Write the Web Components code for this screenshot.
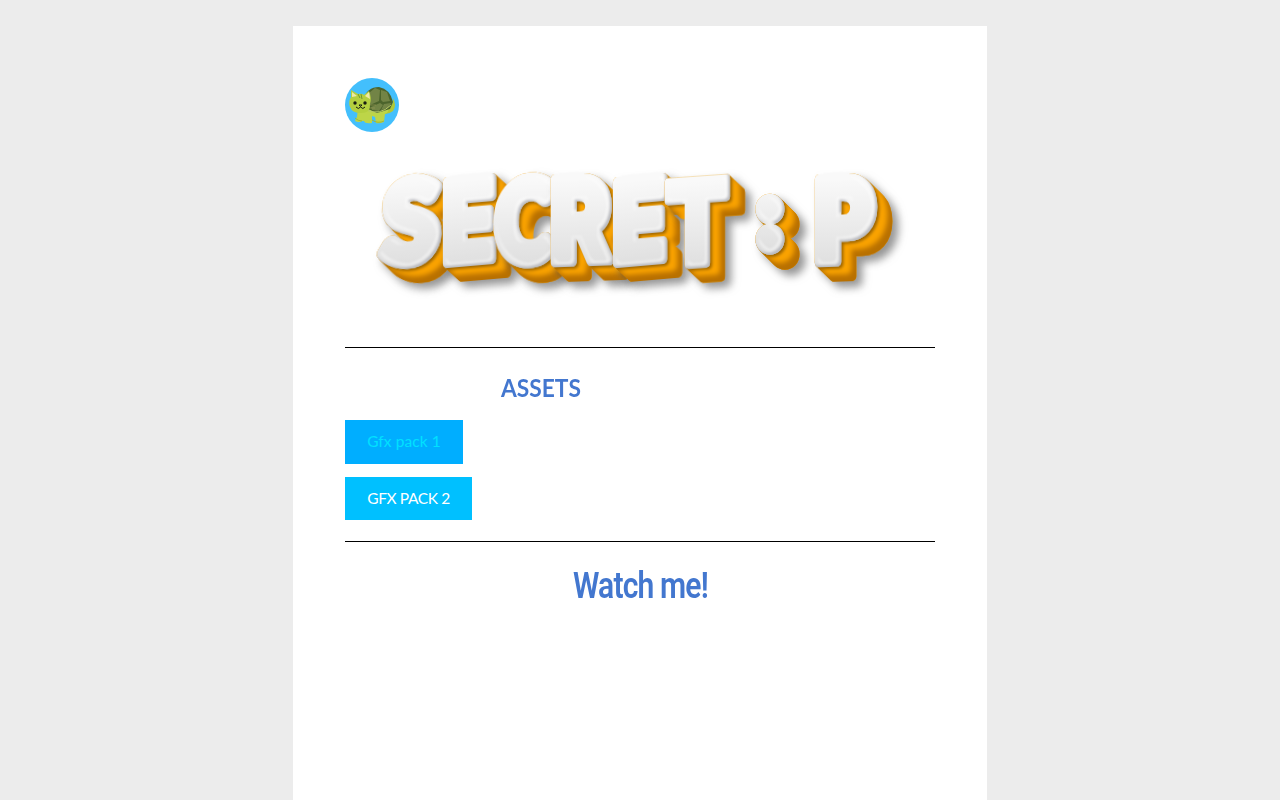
<!DOCTYPE html>
<html lang="en"><head><meta charset="utf-8"><title>Secret :P</title>
<style>html,body{margin:0;height:100%;overflow:hidden;background:#ececec}</style></head>
<body><secret-page></secret-page>
<script>
const define=(name,html)=>customElements.define(name,class extends HTMLElement{
  constructor(){super();const t=document.createElement('template');t.innerHTML=html;this.attachShadow({mode:'open'}).append(t.content.cloneNode(true));}
});

define('turtle-avatar',`<style>:host{display:block;width:54px;height:54px}svg{display:block}</style>
<svg width="54" height="54" viewBox="0 0 54 54"><circle cx="27" cy="27" r="27" fill="#43bffc"/>
<path d="M43 29Q49 27 48 20Q52 27 48 33Q43 37 37 36Z" fill="#b0c836"/>
<path d="M13 30L43 28Q45 34 40 36L39 44Q34 46 31 45L30 39L27 38L27 45Q20 46 19 43L17 43Q14 45 10 43L12 39Z" fill="#bdd548"/>
<path d="M10 40Q13 43 17 43M27 42Q33 46 39 43" stroke="#9eb83b" fill="none"/>
<path d="M18 22Q22 9 34 9Q45 11 48 24L45 31L32 35L23 31Z" fill="#4c642c"/>
<path d="M24 15L30 10L35 12L34 23L25 27ZM36 12L42 14L45 23L38 24L36 22ZM26 29L35 25L38 27L34 33L27 32ZM39 26L46 25L43 30L36 32Z" fill="#728446"/>
<path d="M21 32Q35 38 46 27" fill="none" stroke="#b5c769"/>
<path d="M6 19L6 12L13 16Q17 15 19 17L24 13Q27 20 25 26Q26 35 16 35Q7 35 5 29Q3 24 6 19Z" fill="#b4cf3f"/>
<path d="M7 19L7 14L12 18ZM20 18L24 14L25 21Z" fill="#eee9a7"/><path d="M13 16L15 20M16 16L17 21" stroke="#6e9630"/>
<circle cx="10" cy="25" r="1.7" fill="#171c12"/><circle cx="20" cy="25" r="1.7" fill="#171c12"/><path d="M14 27H17L15.5 28.5ZM11 29Q13.5 32 15.5 29Q18 32 20 29" stroke="#171c12" fill="none"/>
<path d="M25 27H31M25 30H30" stroke="#9c9b57" stroke-width=".6"/></svg>`);

define('secret-wordmark',`<style>:host{display:block;height:170px}svg{display:block;overflow:visible}
text{font-weight:900;font-size:117px;stroke-linejoin:round;vector-effect:non-scaling-stroke}</style>
<svg width="590" height="170" viewBox="345 150 590 170" role="img" aria-label="SECRET : P"><defs>
<filter id="relief" filterUnits="userSpaceOnUse" x="-20" y="-120" width="160" height="180" color-interpolation-filters="sRGB">
<feOffset in="SourceAlpha" dx="1" dy="1" result="a"/><feMerge result="b"><feMergeNode in="SourceAlpha"/><feMergeNode in="a"/></feMerge>
<feOffset in="b" dx="2" dy="2" result="c"/><feMerge result="d"><feMergeNode in="b"/><feMergeNode in="c"/></feMerge>
<feOffset in="d" dx="4" dy="4" result="e"/><feMerge result="f"><feMergeNode in="d"/><feMergeNode in="e"/></feMerge>
<feOffset in="f" dx="8" dy="8" result="g"/><feMerge result="body"><feMergeNode in="f"/><feMergeNode in="g"/></feMerge>
<feFlood flood-color="#faa300"/><feComposite in2="body" operator="in" result="orange"/>
<feGaussianBlur in="body" stdDeviation="2.5" result="soft"/><feOffset in="soft" dx="-5" dy="-7" result="softmove"/>
<feFlood flood-color="#b87000"/><feComposite in2="body" operator="in" result="brown"/><feComposite in="brown" in2="softmove" operator="out" result="rim"/>
<feGaussianBlur in="SourceAlpha" stdDeviation="1.5" result="faceblur"/><feOffset in="faceblur" dx="1.5" dy="2" result="contact"/>
<feFlood flood-color="#8a5800" flood-opacity=".85"/><feComposite in2="contact" operator="in" result="contactcolor"/>
<feComposite in="contactcolor" in2="body" operator="in" result="contactclip"/>
<feGaussianBlur in="body" stdDeviation="4" result="shadowblur"/><feOffset in="shadowblur" dx="6" dy="6" result="shadowmove"/>
<feFlood flood-color="#555" flood-opacity=".62"/><feComposite in2="shadowmove" operator="in" result="shadow"/>
<feGaussianBlur in="SourceAlpha" stdDeviation="1.3" result="edge"/><feOffset in="edge" dx="-2" dy="-2" result="edgemove"/>
<feFlood flood-color="#b0b2b8" flood-opacity=".8"/><feComposite in2="SourceAlpha" operator="in" result="gray"/><feComposite in="gray" in2="edgemove" operator="out" result="bevel"/>
<feMorphology in="SourceAlpha" operator="erode" radius="3" result="inner"/><feMorphology in="SourceAlpha" operator="erode" radius="5" result="inner2"/><feComposite in="inner" in2="inner2" operator="out" result="ring"/><feOffset in="inner2" dx="-2" dy="-2" result="innershift"/><feComposite in="ring" in2="innershift" operator="out" result="glint"/><feGaussianBlur in="glint" stdDeviation=".8" result="glintblur"/><feFlood flood-color="#fff" flood-opacity=".45"/><feComposite in2="glintblur" operator="in" result="highlight"/>
<feMerge><feMergeNode in="shadow"/><feMergeNode in="orange"/><feMergeNode in="rim"/><feMergeNode in="contactclip"/><feMergeNode in="SourceGraphic"/><feMergeNode in="bevel"/><feMergeNode in="highlight"/></feMerge></filter>
<linearGradient id="paper" gradientUnits="userSpaceOnUse" x1="0" y1="-85" x2="0" y2="4"><stop stop-color="#f9f9f9"/><stop offset="1" stop-color="#dfdfdf"/></linearGradient></defs>
<g id="letters"></g></svg>`);
customElements.define('bubble-wordmark',class extends HTMLElement{
 constructor(){super();const source=document.createElement('secret-wordmark');this.attachShadow({mode:'open'}).innerHTML='<style>:host{display:block}</style>';this.shadowRoot.append(source);
 const g=source.shadowRoot.querySelector('#letters');
 // glyph, left edge, width, skewY, skewX, bottom edge, vertical scale, outline, family
 const letters=[['S',376,65,-4,-3,270,.93,14,'Lato'],['E',442,55,-5,0,268,.95,9,'Inter'],['C',491,68,-2,-2,268,.93,14,'Lato'],['R',550,65,-2,0,267,.97,9,'Inter'],['E',612,56,-5,0,268,.95,9,'Inter'],['T',664,67,-4,0,270,.97,8,'Inter'],[':',755,30,0,0,253,.76,13,'Inter'],['P',814,64,-2,0,267,.97,9,'Inter']];
 for(const spec of letters){const wrap=document.createElementNS('http://www.w3.org/2000/svg','g'),t=document.createElementNS('http://www.w3.org/2000/svg','text');t.textContent=spec[0];t.style.fill='url(#paper)';t.style.stroke='url(#paper)';t.style.strokeWidth=spec[7]+'px';t.style.fontFamily=spec[8]+',sans-serif';wrap.append(t);g.append(wrap);wrap.dataset.box=spec.slice(1,8).join(',');wrap.dataset.face=spec[8];}
 }
 connectedCallback(){for(const g of this.shadowRoot.querySelector('secret-wordmark').shadowRoot.querySelectorAll('#letters g')){const [x,w,sy,sx,y,vs,o]=g.dataset.box.split(',').map(Number),t=g.firstChild,c=document.createElement('canvas').getContext('2d');c.font='900 117px '+g.dataset.face;const m=c.measureText(t.textContent),ink=m.actualBoundingBoxRight+m.actualBoundingBoxLeft,scale=(w-o)/ink;
 t.setAttribute('transform',`translate(${o/2+m.actualBoundingBoxLeft*scale} 0) scale(${scale} ${vs})`);g.setAttribute('transform',`translate(${x} ${y-o/2}) skewY(${sy}) skewX(${sx})`);g.setAttribute('filter','url(#relief)');}}
});
define('page-rule','<style>:host{display:block;height:1px;background:#000}</style>');
define('pack-button',`<style>:host{display:flex;align-items:center;justify-content:center;box-sizing:border-box;width:var(--w);height:var(--h);padding-bottom:var(--pb,1px);background:var(--bg);color:var(--ink);font:15.5px Lato,sans-serif;letter-spacing:var(--ls);white-space:nowrap}</style><span><slot></slot></span>`);
define('page-title',`<style>:host{display:block;color:#4377cf;font:var(--title-font);letter-spacing:var(--title-spacing)}span{display:inline-block;white-space:nowrap;transform:scaleX(var(--squeeze,1));transform-origin:left}</style><span><slot></slot></span>`);
define('secret-page',`<style>
:host{display:block}main{box-sizing:border-box;width:694px;height:774px;margin:26px auto 0;padding:52px;background:#fff}
bubble-wordmark{margin-top:18px;height:197px}
.assets{margin:23px 0 0 156px;height:49px;--title-font:700 25px/32px Lato,sans-serif;--title-spacing:0px;--squeeze:.91}
.one{--w:118px;--h:44px;--pb:2px;--bg:#00aeff;--ink:#00e1ff;--ls:.08px}.two{margin-top:13px;--w:127px;--h:43px;--bg:#00c0ff;--ink:#fff;--ls:-.4px}
.second{margin-top:21px}.watch{margin:21px 0 0 228px;--title-font:600 36px/46px Roboto,sans-serif;--title-spacing:-1px;--squeeze:.835}
</style><main><turtle-avatar></turtle-avatar><bubble-wordmark></bubble-wordmark><page-rule></page-rule>
<page-title class="assets">ASSETS</page-title><pack-button class="one">Gfx pack 1</pack-button><pack-button class="two">GFX PACK 2</pack-button>
<page-rule class="second"></page-rule><page-title class="watch">Watch me!</page-title></main>`);
</script></body></html>
